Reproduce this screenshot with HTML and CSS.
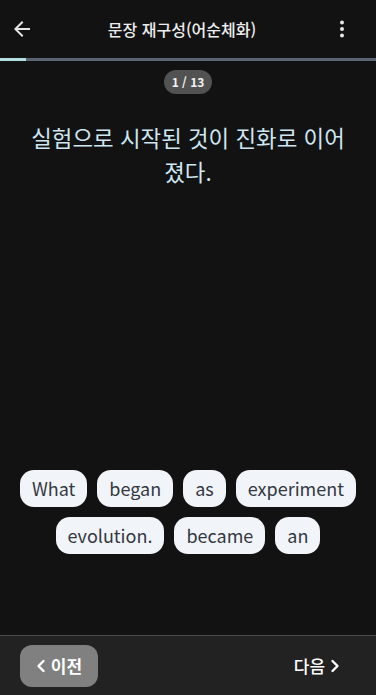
FILE: index.html
```
<!DOCTYPE html>
<html lang="ko">
<head>
<meta charset="utf-8">
<link rel="stylesheet" href="styles.css">
</head>
<body>
<div class="app">
  <header class="topbar">
    <button class="icon-btn" aria-label="back">
      <svg width="24" height="24" viewBox="0 0 24 24"><path d="M20 11H7.83l5.59-5.59L12 4l-8 8 8 8 1.41-1.41L7.83 13H20v-2z" fill="#e6e6e6"/></svg>
    </button>
    <h1 class="title">문장 재구성(어순체화)</h1>
    <button class="icon-btn" aria-label="menu">
      <svg width="24" height="24" viewBox="0 0 24 24"><circle cx="12" cy="5.5" r="2" fill="#e6e6e6"/><circle cx="12" cy="12" r="2" fill="#e6e6e6"/><circle cx="12" cy="18.5" r="2" fill="#e6e6e6"/></svg>
    </button>
  </header>
  <div class="progress"><div class="progress-fill" style="width:26px"></div></div>
  <main class="content">
    <div class="counter">1 / 13</div>
    <p class="sentence">실험으로 시작된 것이 진화로 이어졌다.</p>
    <div class="spacer"></div>
    <div class="chips">
      <span class="chip">What</span>
      <span class="chip">began</span>
      <span class="chip">as</span>
      <span class="chip">experiment</span>
      <span class="chip">evolution.</span>
      <span class="chip">became</span>
      <span class="chip">an</span>
    </div>
  </main>
  <footer class="bottombar">
    <button class="nav-btn prev">
      <svg width="10" height="14" viewBox="0 0 10 14"><polyline points="7.5,2 2.5,7 7.5,12" fill="none" stroke="#fff" stroke-width="2.4" stroke-linecap="round" stroke-linejoin="round"/></svg>
      <span>이전</span>
    </button>
    <button class="nav-btn next">
      <span>다음</span>
      <svg width="10" height="14" viewBox="0 0 10 14"><polyline points="2.5,2 7.5,7 2.5,12" fill="none" stroke="#fff" stroke-width="2.4" stroke-linecap="round" stroke-linejoin="round"/></svg>
    </button>
  </footer>
</div>
</body>
</html>
```
FILE: styles.css
```
* { box-sizing: border-box; }
html, body { margin: 0; padding: 0; background: #121212; }
body { font-family: "Noto Sans CJK KR", "Noto Sans", sans-serif; color: #e6e6e6; }
.app { width: 376px; height: 695px; display: flex; flex-direction: column; }
.topbar { height: 58px; display: flex; align-items: center; justify-content: space-between; padding: 0 10px; }
.icon-btn { width: 24px; height: 24px; padding: 0; border: 0; background: none; display: flex; align-items: center; justify-content: center; }
.icon-btn:last-child { margin-right: 12px; }
.title { margin: 0; font-size: 16px; font-weight: 500; color: #ededed; }
.progress { height: 3px; background: #5c6372; }
.progress-fill { height: 100%; background: #b3dfe0; }
.content { flex: 1; display: flex; flex-direction: column; align-items: center; padding: 9px 0 81px; }
.counter { height: 24px; padding: 0 8px; border-radius: 12px; background: #525252; color: #f2f2f2; font-size: 12px; font-weight: 700; line-height: 24px; }
.sentence { margin: 26px 0 0; padding: 0 28px; text-align: center; font-size: 22.4px; line-height: 34px; color: #cde6f2; }
.spacer { flex: 1; }
.chips { display: flex; flex-wrap: wrap; justify-content: center; gap: 10px; padding: 0 14px; }
.chip { height: 37px; padding: 0 12px; border-radius: 14px; background: #f1f4f9; color: #333842; font-size: 18px; line-height: 37px; }
.bottombar { height: 60px; border-top: 1px solid #4d4d4d; background: #222222; display: flex; align-items: center; justify-content: space-between; padding: 0 20px; }
.nav-btn { width: 78px; height: 42px; border: 0; border-radius: 12px; display: flex; align-items: center; justify-content: center; gap: 5px; font-family: inherit; font-size: 17px; font-weight: 700; color: #fff; background: transparent; padding: 0; }
.nav-btn.prev { background: #808080; }
.nav-btn.next { font-weight: 500; }
```
